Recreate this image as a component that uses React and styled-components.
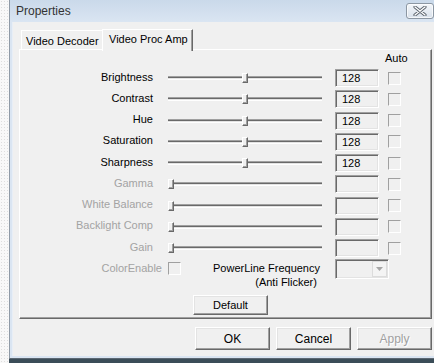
import React from 'react'
import styled, { createGlobalStyle } from 'styled-components'

const GlobalStyle = createGlobalStyle`
  html, body {
    margin: 0;
    padding: 0;
  }
  body {
    font-family: 'Liberation Sans', Arial, sans-serif;
    font-size: 11px;
    color: #000;
  }
`

const controls = [
  { label: 'Brightness', value: 128 },
  { label: 'Contrast', value: 128 },
  { label: 'Hue', value: 128 },
  { label: 'Saturation', value: 128 },
  { label: 'Sharpness', value: 128 },
  { label: 'Gamma', disabled: true },
  { label: 'White Balance', disabled: true },
  { label: 'Backlight Comp', disabled: true },
  { label: 'Gain', disabled: true },
]

const SLIDER_WIDTH = 154
const THUMB_WIDTH = 6

const Slider = ({ value = 0 }) => {
  const left = Math.round(((SLIDER_WIDTH - THUMB_WIDTH) * value) / 255)
  return (
    <SliderBox>
      <Track />
      <Thumb style={{ left }} />
    </SliderBox>
  )
}

const CloseGlyph = () => (
  <svg width="14" height="10" viewBox="0 0 14 10">
    <path d="M2 1 L12 9 M12 1 L2 9" stroke="#5b636d" strokeWidth="3.2" strokeLinecap="round" />
    <path d="M2 1 L12 9 M12 1 L2 9" stroke="#ffffff" strokeWidth="1.3" strokeLinecap="round" />
  </svg>
)

const App = () => {
  return (
    <>
      <GlobalStyle />
      <Page>
        <Desktop>
          <Window>
            <TitleBar>
              <Title>Properties</Title>
              <CloseButton>
                <CloseGlyph />
              </CloseButton>
            </TitleBar>
            <Client>
              <TabStrip>
                <Tab>Video Decoder</Tab>
                <Tab active>Video Proc Amp</Tab>
              </TabStrip>
              <Panel>
                <AutoHeader>Auto</AutoHeader>
                <Rows>
                  {controls.map((c) => (
                    <Row key={c.label}>
                      <Label disabled={c.disabled}>{c.label}</Label>
                      <Slider value={c.value} />
                      <Edit>{c.value}</Edit>
                      <Check />
                    </Row>
                  ))}
                </Rows>
                <ExtraRow>
                  <ColorLabel>ColorEnable</ColorLabel>
                  <ColorCheck />
                  <PowerLabel>
                    PowerLine Frequency
                    <br />
                    (Anti Flicker)&nbsp;
                  </PowerLabel>
                  <Combo>
                    <ComboButton>
                      <svg width="7" height="4" viewBox="0 0 7 4">
                        <path d="M0 0 H7 L3.5 4 Z" fill="#a6a6a6" />
                      </svg>
                    </ComboButton>
                  </Combo>
                </ExtraRow>
                <DefaultRow>
                  <Button>Default</Button>
                </DefaultRow>
              </Panel>
              <ButtonRow>
                <DialogButton>OK</DialogButton>
                <DialogButton>Cancel</DialogButton>
                <DialogButton disabled>Apply</DialogButton>
              </ButtonRow>
            </Client>
          </Window>
        </Desktop>
      </Page>
    </>
  )
}

const Page = styled.div`
  display: flex;
  width: 434px;
  height: 363px;
  overflow: hidden;
  background: #f8f8f8 radial-gradient(#dedede 0.7px, transparent 0.9px) 0 0 / 3px 3px;
`
const Desktop = styled.div`
  margin-left: 9px;
  flex: 1;
  display: flex;
  flex-direction: column;
  background: #3b4d58;
`
const Window = styled.div`
  width: 425px;
  height: 358px;
  flex: none;
  display: flex;
  flex-direction: column;
  border-left: 1px solid #8f9aa6;
  border-bottom: 1px solid #5d6873;
  background: #dae5f2;
`
const TitleBar = styled.div`
  height: 22px;
  flex: none;
  display: flex;
  align-items: center;
  padding: 0 1px 0 6px;
  background: linear-gradient(#cad9ea, #dae5f2);
`
const Title = styled.span`
  flex: 1;
  font-size: 12px;
  color: #333;
  padding-bottom: 1px;
`
const CloseButton = styled.div`
  width: 28px;
  height: 16px;
  box-sizing: border-box;
  margin-top: -1px;
  display: flex;
  align-items: center;
  justify-content: center;
  border: 1px solid #8c97a3;
  border-radius: 3px;
  background: linear-gradient(#f3f6fa, #d9e1eb);
  box-shadow: inset 0 0 0 1px rgba(255, 255, 255, 0.7);
`
const Client = styled.div`
  flex: 1;
  margin: 0 0 2px 2px;
  padding: 7px 0 0 6px;
  background: #f0f0f0;
  border-left: 1px solid #e8eef6;
`
const TabStrip = styled.div`
  display: flex;
  align-items: flex-end;
  height: 20px;
  padding-left: 2px;
  position: relative;
  z-index: 1;
`
const Tab = styled.div`
  box-sizing: border-box;
  height: ${({ active }) => (active ? '22px' : '19px')};
  width: ${({ active }) => (active ? '91px' : '81px')};
  margin-bottom: ${({ active }) => (active ? '-2px' : '0')};
  padding: ${({ active }) => (active ? '3px 0 0 6px' : '4px 0 0 4px')};
  background: #f0f0f0;
  border-top: 1px solid #fff;
  border-left: 1px solid #fff;
  border-right: ${({ active }) => (active ? '1px solid #696969' : 'none')};
  box-shadow: ${({ active }) => (active ? 'inset -1px 0 0 #a0a0a0' : 'none')};
  white-space: nowrap;
`
const Panel = styled.div`
  width: 413px;
  height: 270px;
  box-sizing: border-box;
  border-top: 1px solid #fff;
  border-left: 1px solid #fff;
  border-right: 1px solid #696969;
  border-bottom: 1px solid #696969;
  box-shadow: inset -1px -1px 0 #a0a0a0;
`
const AutoHeader = styled.div`
  height: 19px;
  padding-left: 365px;
  line-height: 17px;
`
const Rows = styled.div`
  display: flex;
  flex-direction: column;
  gap: 3.25px;
`
const Row = styled.div`
  display: flex;
  align-items: center;
  height: 18px;
`
const Label = styled.div`
  width: 133px;
  flex: none;
  text-align: right;
  padding-bottom: 3px;
  color: ${({ disabled }) => (disabled ? '#a3a3a3' : '#000')};
  white-space: nowrap;
`
const SliderBox = styled.div`
  position: relative;
  width: ${SLIDER_WIDTH}px;
  height: 18px;
  margin-left: 15px;
  flex: none;
`
const Track = styled.div`
  margin-top: 7px;
  height: 4px;
  background: linear-gradient(#a0a0a0 0 1px, #696969 1px 2px, #e3e3e3 2px 3px, #fff 3px);
`
const Thumb = styled.div`
  position: absolute;
  top: 4px;
  width: ${THUMB_WIDTH}px;
  height: 10px;
  box-sizing: border-box;
  background: #f0f0f0;
  border-top: 1px solid #fff;
  border-left: 1px solid #fff;
  border-right: 1px solid #696969;
  border-bottom: 1px solid #696969;
  box-shadow: inset -1px -1px 0 #a0a0a0;
`
const Edit = styled.div`
  width: 44px;
  height: 18px;
  box-sizing: border-box;
  margin-left: 13px;
  flex: none;
  padding-left: 6px;
  line-height: 16px;
  border: 1px solid;
  border-color: #a0a0a0 #fff #fff #a0a0a0;
  box-shadow: inset 1px 1px 0 #696969, inset -1px -1px 0 #e3e3e3;
  background: #f0f0f0;
`
const Check = styled.div`
  width: 13px;
  height: 13px;
  box-sizing: border-box;
  margin-left: 9px;
  flex: none;
  border: 1px solid;
  border-color: #a0a0a0 #fff #fff #a0a0a0;
  background: #f0f0f0;
`
const ExtraRow = styled.div`
  display: flex;
  align-items: flex-start;
  height: 36px;
  margin-top: 2px;
`
const ColorLabel = styled.div`
  width: 142px;
  flex: none;
  text-align: right;
  margin-top: 3px;
  line-height: 13px;
  color: #a3a3a3;
`
const ColorCheck = styled(Check)`
  margin: 3px 0 0 6px;
`
const PowerLabel = styled.div`
  width: 139px;
  flex: none;
  text-align: right;
  margin-top: 2px;
  line-height: 14px;
  white-space: nowrap;
`
const Combo = styled.div`
  width: 54px;
  height: 20px;
  box-sizing: border-box;
  margin-left: 15px;
  flex: none;
  display: flex;
  justify-content: flex-end;
  align-items: center;
  padding-right: 1px;
  border: 1px solid;
  border-color: #a0a0a0 #fff #fff #a0a0a0;
  box-shadow: inset 1px 1px 0 #696969, inset -1px -1px 0 #e3e3e3;
  background: #f0f0f0;
`
const ComboButton = styled.div`
  width: 15px;
  height: 16px;
  box-sizing: border-box;
  display: flex;
  align-items: center;
  justify-content: center;
  border: 1px solid #dcdcdc;
  background: #f4f4f4;
`
const DefaultRow = styled.div`
  display: flex;
  padding-left: 173px;
`
const Button = styled.div`
  width: 75px;
  height: 20px;
  box-sizing: border-box;
  display: flex;
  align-items: center;
  justify-content: center;
  border: 1px solid;
  border-color: #fff #696969 #696969 #fff;
  box-shadow: inset -1px -1px 0 #a0a0a0, inset 1px 1px 0 #e3e3e3;
  background: #f0f0f0;
  color: ${({ disabled }) => (disabled ? '#a0a0a0' : '#000')};
  text-shadow: ${({ disabled }) => (disabled ? '1px 1px 0 #fff' : 'none')};
`
const ButtonRow = styled.div`
  display: flex;
  justify-content: flex-end;
  gap: 6px;
  width: 413px;
  margin-top: 8px;
`
const DialogButton = styled(Button)`
  height: 23px;
  font-size: 12px;
`

export default App
